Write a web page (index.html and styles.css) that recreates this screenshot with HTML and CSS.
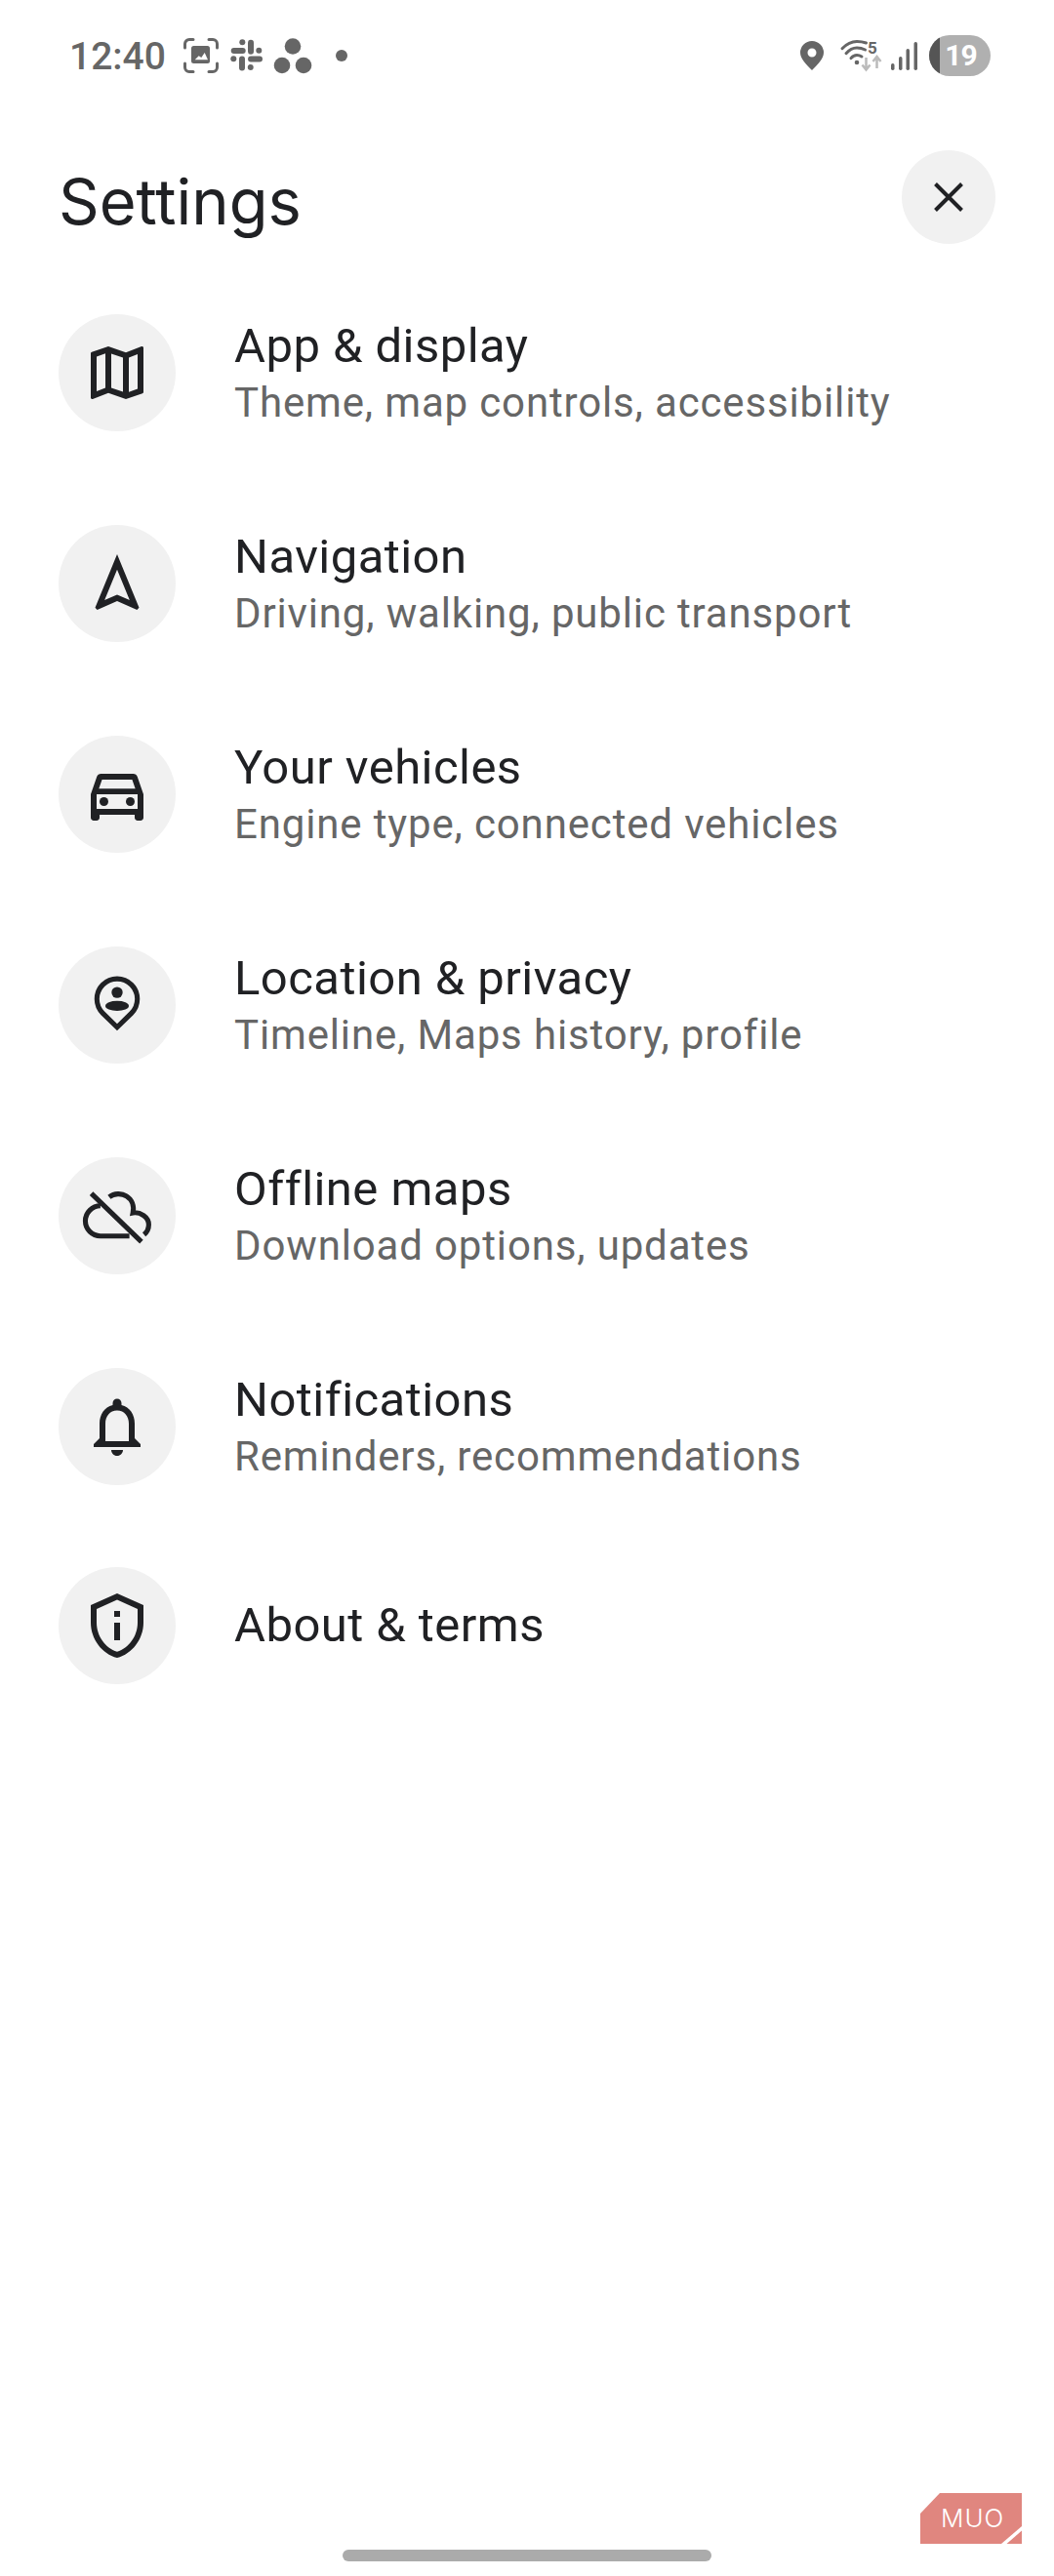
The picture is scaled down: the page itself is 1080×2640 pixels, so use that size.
FILE: index.html
```html
<!DOCTYPE html>
<html lang="en">
<head>
    <meta charset="UTF-8">
    <meta name="viewport" content="width=device-width, initial-scale=1.0">
    <title>Settings</title>
    <link rel="stylesheet" href="styles.css">
</head>
<body>
    <div class="statusbar">
        <div class="status-left">
            <span class="time">12:40</span>
            <svg class="st-frame" viewBox="0 0 36 36"><path d="M1.5 10V6a4.5 4.5 0 0 1 4.5-4.5h4M26 1.5h4a4.5 4.5 0 0 1 4.5 4.5v4M34.5 26v4a4.5 4.5 0 0 1-4.5 4.5h-4M10 34.5H6a4.5 4.5 0 0 1-4.5-4.5v-4" fill="none" stroke="#666" stroke-width="3" stroke-linecap="round"/><rect x="8" y="8" width="19" height="18" rx="2.5" fill="#666"/><path d="M11.7 22.3L15.7 18.3 18.3 20 21.7 15 25 22.3z" fill="#fff"/></svg>
            <svg class="st-slack" viewBox="0 0 34 34" fill="#666"><rect x="0.7" y="9" width="15" height="6" rx="3"/><rect x="18" y="0.7" width="6" height="15" rx="3"/><rect x="18" y="17.5" width="15" height="6" rx="3"/><rect x="9" y="17.5" width="6" height="15" rx="3"/><circle cx="12.3" cy="3.2" r="3"/><circle cx="29.3" cy="11.7" r="3"/><circle cx="3.3" cy="20.3" r="3"/><circle cx="20.7" cy="29" r="3"/></svg>
            <svg class="st-dots" viewBox="0 0 40 37" fill="#666"><circle cx="20" cy="8.5" r="8.3"/><circle cx="9" cy="28" r="8.3"/><circle cx="31" cy="28" r="8.3"/></svg>
            <span class="st-dot"></span>
        </div>
        <div class="status-right">
            <svg class="st-pin" viewBox="0 0 24 30"><path fill-rule="evenodd" d="M12 0a12 12 0 0 1 12 12c0 6-6 12-12 18C6 24 0 18 0 12A12 12 0 0 1 12 0zm0 7.5a4.5 4.5 0 1 0 0 9 4.5 4.5 0 0 0 0-9z" fill="#666"/></svg>
            <svg class="st-wifi" viewBox="0 0 42 32"><g fill="none" stroke="#666" stroke-width="3" stroke-linecap="round"><path d="M1 8.7Q8 1.5 16 1.5 21 1.5 25.5 3"/><path d="M5 13.7Q10 8 16 8 20.5 8 24.5 10"/><path d="M10 18.7Q12.5 15.5 16 15.5 18.5 15.5 21 17"/></g><circle cx="16" cy="23" r="2.3" fill="#666"/><text class="st-five" x="27" y="14">5</text><path d="M25.5 18V30M21.5 25.5L25.5 30.5 29.5 25.5M36.5 29V17.5M32.5 22L36.5 17 40.5 22" fill="none" stroke="#bbb" stroke-width="2.5"/></svg>
            <svg class="st-signal" viewBox="0 0 27 29" fill="#666"><rect x="0" y="22" width="3.5" height="7" rx="1.7"/><rect x="8" y="15" width="3.5" height="14" rx="1.7"/><rect x="15.5" y="7" width="3.5" height="22" rx="1.7"/><rect x="23.5" y="0" width="3.5" height="29" rx="1.7"/></svg>
            <div class="battery"><span class="battery-fill"></span><span class="battery-num">19</span></div>
        </div>
    </div>

    <div class="header">
        <h1>Settings</h1>
        <div class="close-btn">
            <svg viewBox="0 0 30 30"><path d="M1.5 1.5l27 27M28.5 1.5l-27 27" stroke="#202124" stroke-width="4" fill="none"/></svg>
        </div>
    </div>

    <div class="menu">
        <div class="row">
            <div class="icon-wrap"><svg viewBox="0 0 24 24"><path d="M20.5 3l-.16.03L15 5.1 9 3 3.36 4.9c-.21.07-.36.25-.36.48V20.5c0 .28.22.5.5.5l.16-.03L9 18.9l6 2.1 5.64-1.9c.21-.07.36-.25.36-.48V3.5c0-.28-.22-.5-.5-.5zM10 5.47l4 1.4v11.66l-4-1.4V5.47zm-5 .99l3-1.01v11.7l-3 1.16V6.46zm14 11.08l-3 1.01V6.86l3-1.16v11.84z"/></svg></div>
            <div class="row-text"><div class="row-title">App &amp; display</div><div class="row-sub">Theme, map controls, accessibility</div></div>
        </div>
        <div class="row">
            <div class="icon-wrap"><svg viewBox="0 0 24 24"><path d="M12 7.27l4.28 10.43-3.47-1.53-.81-.36-.81.36-3.47 1.53L12 7.27M12 2L4.5 20.29l.71.71L12 18l6.79 3 .71-.71L12 2z"/></svg></div>
            <div class="row-text"><div class="row-title">Navigation</div><div class="row-sub">Driving, walking, public transport</div></div>
        </div>
        <div class="row">
            <div class="icon-wrap"><svg viewBox="0 0 24 24"><path d="M18.92 6.01C18.72 5.42 18.16 5 17.5 5h-11c-.66 0-1.21.42-1.42 1.01L3 12v8c0 .55.45 1 1 1h1c.55 0 1-.45 1-1v-1h12v1c0 .55.45 1 1 1h1c.55 0 1-.45 1-1v-8l-2.08-5.99zM6.85 7h10.29l1.08 3.11H5.77L6.85 7zM19 17H5v-5h14v5z"/><circle cx="7.5" cy="14.5" r="1.5"/><circle cx="16.5" cy="14.5" r="1.5"/></svg></div>
            <div class="row-text"><div class="row-title">Your vehicles</div><div class="row-sub">Engine type, connected vehicles</div></div>
        </div>
        <div class="row">
            <div class="icon-wrap"><svg viewBox="0 0 24 24"><path d="M12 19.6L7.1 14.8a6.9 6.9 0 1 1 9.8 0z" fill="none" stroke="#202124" stroke-width="1.7"/><circle cx="12" cy="7.7" r="1.9"/><ellipse cx="12" cy="12.3" rx="4" ry="1.7"/></svg></div>
            <div class="row-text"><div class="row-title">Location &amp; privacy</div><div class="row-sub">Timeline, Maps history, profile</div></div>
        </div>
        <div class="row">
            <div class="icon-wrap"><svg viewBox="0 0 24 24"><g fill="none" stroke="#202124" stroke-width="1.7"><path d="M3.2 4.4L20.3 20.9"/><path d="M6.3 8.6A5.15 5.15 0 0 0 6.3 18.9H16.2"/><path d="M9.3 5.6C11 4.3 13.5 4.2 15.2 5.3C17 6.4 17.9 8.6 17.4 11C19.8 10.6 22.8 12.4 22.8 15C22.8 16.4 22.2 17.6 21.2 18.4"/></g></svg></div>
            <div class="row-text"><div class="row-title">Offline maps</div><div class="row-sub">Download options, updates</div></div>
        </div>
        <div class="row">
            <div class="icon-wrap"><svg viewBox="0 0 24 24"><path d="M12 22c1.1 0 2-.9 2-2h-4c0 1.1.9 2 2 2zm6-6v-5c0-3.07-1.63-5.64-4.5-6.32V4c0-.83-.67-1.5-1.5-1.5s-1.5.67-1.5 1.5v.68C7.64 5.36 6 7.92 6 11v5l-2 2v1h16v-1l-2-2zm-2 1H8v-6c0-2.48 1.51-4.5 4-4.5s4 2.02 4 4.5v6z"/></svg></div>
            <div class="row-text"><div class="row-title">Notifications</div><div class="row-sub">Reminders, recommendations</div></div>
        </div>
        <div class="row row-single">
            <div class="icon-wrap"><svg viewBox="0 0 24 24"><path d="M12 3.19l7 3.11V11c0 4.52-2.98 8.69-7 9.93-4.02-1.24-7-5.41-7-9.93V6.3l7-3.11M12 1L3 5v6c0 5.55 3.84 10.74 9 12 5.16-1.26 9-6.45 9-12V5l-9-4zm-1 6h2v2h-2zm0 4h2v6h-2z"/></svg></div>
            <div class="row-text"><div class="row-title">About &amp; terms</div></div>
        </div>
    </div>

    <div class="home-bar"></div>

    <div class="muo">
        <svg viewBox="0 0 104 52"><path d="M20 0H104V34L83 52H0V21z" fill="#e0867f"/><path d="M104 38.5V52H88.5z" fill="#e0867f"/></svg>
        <span class="muo-text">MUO</span>
    </div>
</body>
</html>
```

FILE: styles.css
```css
* {
    box-sizing: border-box;
}

body {
    margin: 0;
    width: 1080px;
    height: 2640px;
    background: #fff;
    position: relative;
    overflow: hidden;
    font-family: Roboto, sans-serif;
    color: #202124;
}

.statusbar {
    height: 114px;
    padding: 36px 65px 0 71px;
    display: flex;
    justify-content: space-between;
}

.status-left, .status-right {
    display: flex;
    align-items: center;
    height: 42px;
}

.time {
    font-size: 39px;
    font-weight: 500;
    color: #666;
    width: 117px;
    margin-top: 2px;
}

.st-frame {
    width: 36px;
    height: 36px;
    margin-right: 12px;
}

.st-slack {
    width: 34px;
    height: 34px;
    margin-right: 10px;
}

.st-dots {
    width: 40px;
    height: 37px;
}

.st-dot {
    width: 12px;
    height: 12px;
    border-radius: 50%;
    background: #666;
    margin-left: 24px;
}

.st-pin {
    width: 24px;
    height: 30px;
    margin-right: 18px;
}

.st-wifi {
    width: 42px;
    height: 32px;
    margin-right: 9px;
    overflow: visible;
}

.st-five {
    font-size: 17px;
    font-weight: 700;
    fill: #666;
}

.st-signal {
    width: 27px;
    height: 29px;
    margin-right: 12px;
}

.battery {
    width: 63px;
    height: 42px;
    border-radius: 21px;
    background: #b0b0b0;
    position: relative;
    overflow: hidden;
    text-align: center;
}

.battery-fill {
    position: absolute;
    left: 0;
    top: 0;
    bottom: 0;
    width: 11px;
    background: #555;
}

.battery-num {
    position: relative;
    color: #fff;
    font-size: 30px;
    font-weight: 700;
    letter-spacing: -1px;
    line-height: 42px;
    padding-left: 2px;
}

.header {
    height: 208px;
    padding: 40px 60px 0 60px;
    display: flex;
    justify-content: space-between;
    align-items: flex-start;
}

h1 {
    margin: 18px 0 0;
    font-family: Inter, sans-serif;
    font-weight: 400;
    font-size: 65px;
    line-height: 70px;
    color: #202124;
}

.close-btn {
    width: 96px;
    height: 96px;
    border-radius: 50%;
    background: #f1f1f1;
    display: flex;
    align-items: center;
    justify-content: center;
}

.close-btn svg {
    width: 30px;
    height: 30px;
}

.menu {
    padding: 0 60px;
}

.row {
    height: 216px;
    display: flex;
    align-items: flex-start;
}

.row-single {
    margin-top: -12px;
}

.icon-wrap {
    width: 120px;
    height: 120px;
    border-radius: 50%;
    background: #f1f1f1;
    display: flex;
    align-items: center;
    justify-content: center;
    margin-right: 60px;
    flex-shrink: 0;
}

.icon-wrap svg {
    width: 72px;
    height: 72px;
    fill: #202124;
}

.row-text {
    display: flex;
    flex-direction: column;
    min-height: 120px;
    padding-top: 4px;
    justify-content: center;
}

.row-single .row-text {
    padding-top: 0;
}

.row-title {
    font-size: 49px;
    letter-spacing: 0.45px;
    line-height: 56px;
    color: #202124;
}

.row-sub {
    font-size: 42px;
    letter-spacing: 0.85px;
    line-height: 56px;
    margin-top: 2px;
    color: #666;
}

.home-bar {
    position: absolute;
    left: 351px;
    top: 2613px;
    width: 378px;
    height: 12px;
    border-radius: 6px;
    background: #ababab;
}

.muo {
    position: absolute;
    left: 943px;
    top: 2555px;
    width: 104px;
    height: 52px;
}

.muo svg {
    display: block;
    width: 104px;
    height: 52px;
}

.muo-text {
    position: absolute;
    left: 21px;
    top: 12px;
    font-family: Inter, sans-serif;
    font-weight: 300;
    font-size: 26px;
    letter-spacing: 1px;
    line-height: 28px;
    color: #fff;
}
```
